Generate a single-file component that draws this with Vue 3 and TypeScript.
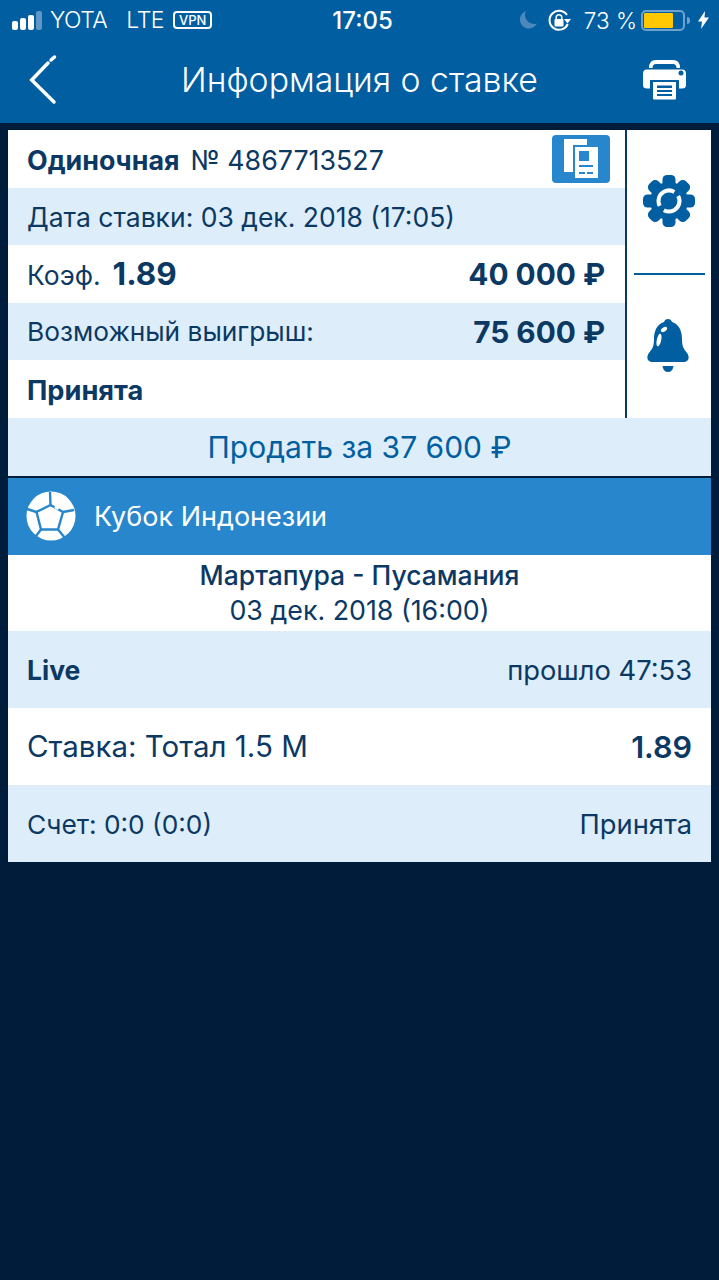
<script setup lang="ts">
const tips = [0, 45, 90, 135, 180, 225, 270, 315]
</script>

<template>
  <div class="screen">
    <header class="top">
      <div class="status">
        <div class="status-left">
          <span class="bars"><i class="b1"></i><i class="b2"></i><i class="b3"></i><i class="b4"></i></span>
          <span class="carrier">YOTA</span>
          <span class="carrier lte">LTE</span>
          <span class="vpn">VPN</span>
        </div>
        <div class="clock">17:05</div>
        <div class="status-right">
          <svg class="moon" width="18" height="18" viewBox="0 0 18 18"><path d="M7 0a9 9 0 1 0 11 12.500A9 9 0 0 1 7 0z" fill="#4d88bd" /></svg>
          <svg class="lock" width="23" height="23" viewBox="0 0 23 23">
            <path d="M19.800 15A9.500 9.500 0 1 1 19 6" fill="none" stroke="#fff" stroke-width="2" />
            <path d="M23 10h-7l3.500 4.500z" fill="#fff" />
            <rect x="6.500" y="10" width="9" height="7.500" rx="1" fill="#fff" />
            <path d="M8.200 10.500V8.500a2.800 2.800 0 0 1 5.600 0v2" fill="none" stroke="#fff" stroke-width="1.500" />
          </svg>
          <span class="pct">73 %</span>
          <span class="battery"><i></i></span>
          <span class="nub"></span>
          <svg width="11" height="18" viewBox="0 0 11 18"><path d="M7 0L0 10.500h4L3 18l8-11.500H6.500z" fill="#fff" /></svg>
        </div>
      </div>
      <div class="navbar">
        <svg class="back" width="30" height="52" viewBox="0 0 30 52" fill="none" stroke="#fff" stroke-width="3.500" stroke-linecap="round">
          <path d="M20 10L3.700 27 26 49" />
          <path d="M23 7l3.500-3" />
        </svg>
        <h1>Информация о ставке</h1>
        <svg class="printer" width="43" height="40" viewBox="0 0 43 40">
          <path d="M6 8Q6 0 13 0H30Q37 0 37 8H33.500Q33.500 4 30 4H13Q9.500 4 9.500 8z" fill="#fff" />
          <path d="M4 9.500H39Q43 9.500 43 13.500V25Q43 28.500 39 28.500H36V20H7V28.500H4Q0 28.500 0 25V13.500Q0 9.500 4 9.500z" fill="#fff" />
          <circle cx="38" cy="13" r="2.500" fill="#005ea1" />
          <path d="M10 22H33V38.500Q33 39.500 32 39.500H11Q10 39.500 10 38.500z" fill="#fff" />
          <path d="M14 25.500H29V28H14zM14 30H29V32H14zM14 34H29V36H14z" fill="#005ea1" />
        </svg>
      </div>
    </header>

    <main class="content">
      <section class="bet">
        <div class="bet-top">
          <div class="rows">
            <div class="row nudge">
              <span class="kind">Одиночная</span>
              <span class="num">№ 4867713527</span>
              <span class="copy">
                <svg width="58" height="48" viewBox="0 0 58 48">
                  <rect x="12" y="4" width="23" height="33" fill="#fff" />
                  <rect x="21" y="10" width="25" height="33" fill="#2887cc" />
                  <rect x="23" y="12" width="23" height="31" fill="#fff" />
                  <rect x="27" y="16" width="10" height="10" fill="#2887cc" />
                  <path d="M27 30h14v2H27zM27 37h6v2h-6zM35 37h6v2h-6z" fill="#2887cc" />
                </svg>
              </span>
            </div>
            <div class="row light nudge">Дата ставки: 03 дек. 2018 (17:05)</div>
            <div class="row between">
              <span class="coef-label">Коэф.<b class="coef">1.89</b></span>
              <b class="money">40 000 ₽</b>
            </div>
            <div class="row light between">
              <span class="win">Возможный выигрыш:</span>
              <b class="money">75 600 ₽</b>
            </div>
            <div class="row nudge"><b class="state">Принята</b></div>
          </div>
          <aside class="side">
            <div class="side-cell">
              <svg width="54" height="54" viewBox="0 0 54 54">
                <g fill="#005ea1">
                  <rect v-for="a in tips" :key="a" x="20.500" y="1" width="13" height="14" rx="4.500" :transform="`rotate(${a} 27 27)`" />
                </g>
                <circle cx="27" cy="27" r="19" fill="#005ea1" />
                <circle cx="27" cy="27" r="10.500" fill="none" stroke="#fff" stroke-width="4" stroke-dasharray="27 6" transform="rotate(-29 27 27)" />
              </svg>
            </div>
            <div class="side-line"></div>
            <div class="side-cell bell">
              <svg width="42" height="54" viewBox="0 0 42 54">
                <path d="M21 0q3 0 4 3C32 5 35 12 35 20 35 28 37 30 40 34 43 38 42 43 36 43H6C0 43-1 38 2 34 5 30 7 28 7 20 7 12 10 5 17 3q1-3 4-3z" fill="#005ea1" />
                <path d="M15.500 47h11q-1 6-5.500 6t-5.500-6z" fill="#005ea1" />
                <ellipse cx="17" cy="10.500" rx="3.500" ry="2" transform="rotate(-35 17 10.500)" fill="#fff" />
                <ellipse cx="12" cy="21" rx="2.200" ry="6.500" transform="rotate(12 12 21)" fill="#fff" />
              </svg>
            </div>
          </aside>
        </div>
        <div class="sell">Продать за 37 600 ₽</div>
      </section>

      <section class="event">
        <div class="league">
          <svg width="50" height="50" viewBox="0 0 50 50">
            <circle cx="25" cy="25" r="24.500" fill="#fff" />
            <g fill="none" stroke="#2887cc" stroke-width="2.400">
              <path d="M24.500 14L37 21l-5 17.500H15L10.500 21z" />
              <path d="M24.500 14L24 1M37 21l11-2M32 38.500L39 47M15 38.500L10 45M10.500 21L1 18" />
            </g>
            <path d="M29 15.500l3.500 2.500" stroke="#fff" stroke-width="3" fill="none" />
          </svg>
          <span>Кубок Индонезии</span>
        </div>
        <div class="match">
          <div>Мартапура - Пусамания</div>
          <div class="match-date">03 дек. 2018 (16:00)</div>
        </div>
        <div class="line light nudge">
          <b class="live">Live</b>
          <span class="elapsed">прошло 47:53</span>
        </div>
        <div class="line stake">
          <span>Ставка: Тотал 1.5 М</span>
          <b class="rate">1.89</b>
        </div>
        <div class="line light nudge">
          <span>Счет: 0:0 (0:0)</span>
          <span class="elapsed">Принята</span>
        </div>
      </section>
    </main>
  </div>
</template>

<style>
html,
body {
  margin: 0;
  background: #001c3b;
}
</style>

<style scoped>
.screen {
  width: 719px;
  height: 1280px;
  background: #001c3b;
  color: #0c3963;
  font-family: Inter, "Noto Sans", sans-serif;
  overflow: hidden;
}

.top {
  height: 123px;
  background: #005ea1;
  color: #fff;
}

.status {
  height: 40px;
  padding: 0 10px 0 12px;
  display: grid;
  grid-template-columns: 1fr auto 1fr;
  align-items: center;
}

.status-left,
.status-right {
  display: flex;
  align-items: center;
}

.status-right {
  justify-content: flex-end;
}

.bars {
  display: flex;
  align-items: flex-end;
  gap: 2px;
  margin-right: 8px;
}

.bars i {
  width: 6px;
  background: #fff;
  border-radius: 2px;
}

.b1 { height: 9px; }
.b2 { height: 12px; }
.b3 { height: 15px; }
.bars .b4 { height: 19px; background: #5f97c6; }

.carrier {
  font-size: 23px;
  font-weight: 300;
  letter-spacing: -0.5px;
}

.lte {
  margin-left: 19px;
}

.vpn {
  margin-left: 9px;
  border: 2px solid #fff;
  border-radius: 4px;
  font-size: 13px;
  font-weight: 500;
  line-height: 14px;
  padding: 0 4px;
}

.clock {
  font-size: 24px;
  font-weight: 500;
  margin-left: 4px;
}

.moon {
  margin-right: 11px;
}

.lock {
  margin-right: 13px;
}

.pct {
  font-size: 22.500px;
  font-weight: 300;
  margin-right: 4px;
}

.battery {
  width: 44px;
  height: 21px;
  box-sizing: border-box;
  border: 2px solid #6ea2cd;
  border-radius: 5px;
  padding: 1px;
  display: flex;
}

.battery i {
  width: 29px;
  background: #ffc800;
  border-radius: 1px;
}

.nub {
  width: 3px;
  height: 7px;
  background: #6ea2cd;
  border-radius: 0 3px 3px 0;
  margin: 0 8px 0 2px;
}

.navbar {
  height: 83px;
  position: relative;
  display: flex;
  align-items: center;
  justify-content: center;
}

.navbar h1 {
  margin: 0 0 4px;
  font-size: 33.800px;
  font-weight: 300;
}

.back {
  position: absolute;
  left: 28px;
  top: 13px;
}

.printer {
  position: absolute;
  left: 643px;
  top: 20px;
}

.content {
  padding: 7px 8px 0;
}

.bet {
  background: #fff;
}

.bet-top {
  display: flex;
}

.rows {
  width: 617px;
}

.row {
  box-sizing: border-box;
  height: 57.600px;
  padding: 0 20px 0 19px;
  display: flex;
  align-items: center;
  font-size: 26.500px;
  font-weight: 400;
}

.row.nudge,
.line.nudge {
  padding-top: 2px;
}

.light {
  background: #ddedfa;
}

.between {
  justify-content: space-between;
}

.kind {
  font-size: 26.800px;
  font-weight: 700;
}

.state {
  font-size: 27.200px;
  font-weight: 700;
}

.num {
  margin-left: 11px;
  font-size: 26.800px;
}

.win {
  font-size: 26.300px;
}

.copy {
  margin: -2px -5px 0 auto;
  width: 58px;
  height: 48px;
  background: #2887cc;
  border-radius: 4px;
  display: flex;
}

.coef {
  margin-left: 12px;
  font-size: 31.500px;
  font-weight: 700;
}

.money {
  font-size: 29.800px;
  font-weight: 700;
}

.side {
  width: 86px;
  border-left: 2px solid #0c3963;
  box-sizing: border-box;
  display: flex;
  flex-direction: column;
  align-items: center;
}

.side-cell {
  flex: 1;
  display: flex;
  align-items: center;
  justify-content: center;
}

.bell {
  padding-right: 2px;
}

.side-line {
  width: 71px;
  height: 2px;
  background: #005ea1;
}

.sell {
  height: 58px;
  background: #ddedfa;
  color: #005ea1;
  font-size: 30px;
  display: flex;
  align-items: center;
  justify-content: center;
}

.event {
  margin-top: 2px;
  background: #fff;
}

.league {
  height: 77px;
  padding: 0 18px;
  background: #2887cc;
  color: #fff;
  display: flex;
  align-items: center;
  gap: 18px;
  font-size: 27px;
}

.match {
  height: 76px;
  display: flex;
  flex-direction: column;
  align-items: center;
  justify-content: center;
  font-size: 26.500px;
  line-height: 35px;
}

.match > div:first-child {
  font-weight: 500;
}

.match-date {
  font-size: 26.800px;
}

.line {
  box-sizing: border-box;
  height: 77px;
  padding: 0 19px;
  display: flex;
  align-items: center;
  justify-content: space-between;
  font-size: 26.300px;
}

.elapsed {
  font-size: 27.300px;
}

.live {
  font-size: 26.500px;
  font-weight: 700;
}

.stake {
  font-size: 29.500px;
}

.rate {
  font-size: 30.500px;
  font-weight: 600;
}
</style>
